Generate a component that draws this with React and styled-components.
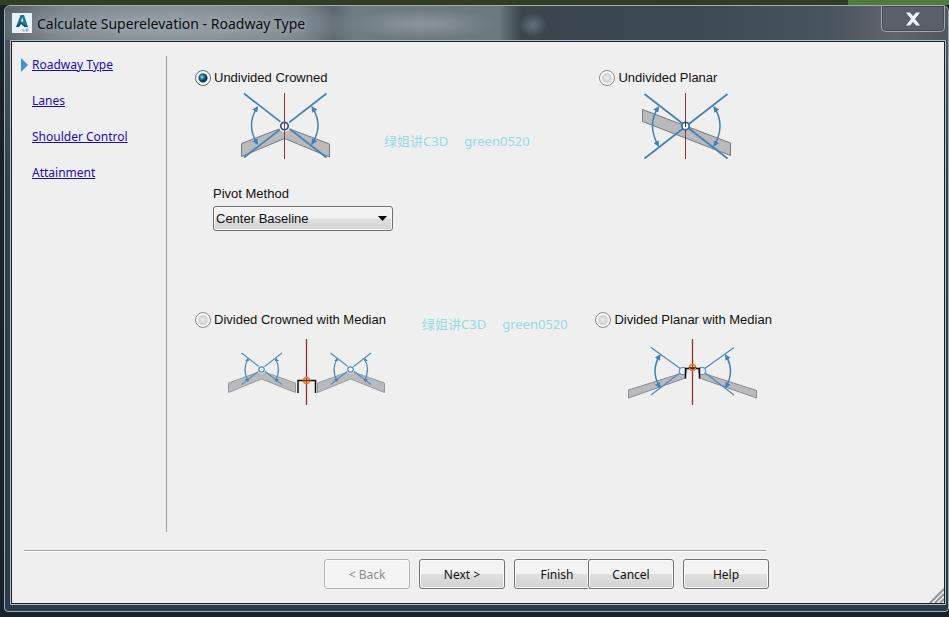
import React, { useState } from "react";
import styled, { createGlobalStyle } from "styled-components";

const dialogFont = `"Noto Sans", "Open Sans", sans-serif`;
const labelFont = `"Liberation Sans", Arial, sans-serif`;

const GlobalStyle = createGlobalStyle`
  * {
    box-sizing: border-box;
  }

  body {
    margin: 0;
    color: #111;
    font-family: ${labelFont};
    font-size: 13px;
  }
`;

const Desktop = styled.div`
  display: flex;
  min-height: 100vh;
  padding: 5px 0 5px 4px;
  background: linear-gradient(90deg, #2f3f22 0, #2f3d24 848px, #4f7c3c 848px) top / 100% 5px
      no-repeat,
    #17222a;
`;

const Window = styled.section`
  display: flex;
  flex: 1;
  flex-direction: column;
  padding: 0 2px 6px 5px;
  border: 1px solid #a3adb0;
  border-radius: 6px 6px 4px 4px;
  background: linear-gradient(180deg, #4d5a62 0, #46525c 60px, #2f4052 180px, #2b3b49 100%);
`;

const TitleBar = styled.header`
  display: flex;
  align-items: flex-start;
  height: 34px;
  margin: 0 -2px 0 -5px;
  padding-left: 7px;
  border-radius: 6px 6px 0 0;
  background: radial-gradient(ellipse 14px 12px at 528px 19px, #66727b, transparent),
    radial-gradient(ellipse 75px 15px at 417px 18px, #8b959e, transparent),
    radial-gradient(ellipse 190px 30px at 170px 19px, #9099a1 30%, transparent),
    linear-gradient(
      90deg,
      #58636a 0,
      #77818a 60px,
      #78828a 290px,
      #5b6770 328px,
      #6f7b83 348px,
      #6c7880 494px,
      #3a454e 516px,
      #3c4852 680px,
      #47535d 820px,
      #62646e 890px,
      #4e5862 100%
    );
`;

const AppIcon = styled.svg`
  width: 20px;
  height: 20px;
  margin-top: 7px;
`;

const Title = styled.h1`
  flex: 1;
  margin: 8px 0 0 5px;
  color: #0b0d10;
  font-family: ${dialogFont};
  font-size: 14px;
  font-weight: 400;
  line-height: 20px;
  text-shadow: 0 0 6px #b9c1c8;
`;

const CloseButton = styled.button`
  display: grid;
  place-items: center;
  width: 64px;
  height: 26px;
  margin-right: 3px;
  padding: 0;
  border: 1px solid #a3a9b0;
  border-top: 0;
  border-radius: 0 0 5px 5px;
  background: #5b5f69;
  box-shadow: inset 0 0 0 1px #454b54;
`;

const Client = styled.div`
  display: flex;
  flex: 1;
  flex-direction: column;
  border: 1px solid #b5bfc4;
  border-radius: 1px;
  outline: 1px solid #16212b;
  outline-offset: -2px;
  padding: 1px;
  background: #f0efef;
`;

const Page = styled.div`
  display: flex;
  flex: 1;
`;

const Nav = styled.nav`
  width: 155px;
  margin-top: 14px;
  padding: 1px 0 0 8px;
  border-right: 1px solid #a0a0a0;
`;

const NavList = styled.ul`
  display: grid;
  gap: 20px;
  margin: 0;
  padding: 0;
  list-style: none;
`;

const NavItem = styled.li`
  display: flex;
  align-items: center;
  height: 16px;
`;

const Marker = styled.svg`
  width: 8px;
  height: 14px;
  margin-right: 4px;
`;

const NavLink = styled.a`
  color: #1a0dab;
  font-family: ${dialogFont};
  font-size: 12px;
  line-height: 16px;
`;

const Options = styled.main`
  display: grid;
  flex: 1;
  grid-template-columns: minmax(0, 8fr) minmax(0, 7fr);
  grid-template-rows: 242px auto;
  column-gap: 2px;
  padding: 28px 0 0 28px;
`;

const Option = styled.div`
  position: relative;
  padding-left: ${props => props.$inset || 0}px;
`;

const RadioLabel = styled.label`
  display: flex;
  align-items: center;
  gap: 3px;
  height: 16px;
  line-height: 16px;
  white-space: nowrap;
`;

const Radio = styled.input`
  appearance: none;
  width: 16px;
  height: 16px;
  margin: 0;
  border: 1px solid #8a8b8c;
  border-radius: 50%;
  background: radial-gradient(circle at 8px 8px, #f0f0f0 0, #cfd0d2 4px, #fafafa 6px) border-box;

  &:checked {
    border-color: #5b6a76;
    background: radial-gradient(circle at 7px 7px, #9fe0f5 0, #2d7fa3 2px, transparent 4px) border-box,
      radial-gradient(circle at 8px 8px, #0e3550 4px, #f4f8fa 5px) border-box;
  }
`;

const Figure = styled.svg`
  display: block;
  margin: ${props => props.$top}px 0 0 ${props => props.$left}px;
`;

const Watermark = styled.div`
  position: absolute;
  top: ${props => props.$top}px;
  left: ${props => props.$left}px;
  display: flex;
  gap: 16px;
  color: #94dbe4;
  font-family: "Noto Sans", "Noto Sans CJK SC", sans-serif;
  font-size: 13px;
  line-height: 18px;
  white-space: nowrap;
`;

const Field = styled.div`
  display: grid;
  gap: 4px;
  width: 180px;
  margin: 26px 0 0 18px;
  line-height: 16px;
`;

const SelectBox = styled.div`
  display: grid;
  align-items: center;

  > * {
    grid-area: 1 / 1;
  }
`;

const Select = styled.select`
  appearance: none;
  width: 100%;
  height: 25px;
  padding: 0 20px 0 2px;
  border: 1px solid #707070;
  border-radius: 3px;
  background: linear-gradient(#f2f2f2 45%, #dfdfe0 55%, #d3d3d4);
  box-shadow: inset 0 0 0 1px #f8f8f8;
  color: #111;
  font: 13px ${labelFont};
`;

const Arrow = styled.svg`
  justify-self: end;
  width: 9px;
  height: 5px;
  margin-right: 6px;
  pointer-events: none;
`;

const Rule = styled.hr`
  height: 2px;
  margin: 18px 178px 0 12px;
  border: 0;
  border-top: 1px solid #a0a0a0;
  border-bottom: 1px solid #fff;
`;

const Footer = styled.footer`
  display: flex;
  gap: 9px;
  justify-content: flex-end;
  padding: 7px 175px 14px 0;
`;

const Button = styled.button`
  width: 86px;
  height: 30px;
  margin-left: ${props => props.$shift || 0}px;
  padding: 0;
  border: 1px solid #707070;
  border-radius: 3px;
  background: linear-gradient(#f3f3f3 48%, #dfdfe0 52%, #d2d2d3);
  box-shadow: inset 0 0 0 1px #fafafa, 0 0 0 1px #f4f4f4;
  color: #111;
  font-family: ${dialogFont};
  font-size: 12px;

  &:disabled {
    border-color: #b0b2b5;
    background: #f4f4f4;
    color: #8a8a8c;
  }
`;

const Grip = styled.svg`
  position: absolute;
  right: 5px;
  bottom: 14px;
  width: 15px;
  height: 15px;
`;

const blue = "#4480b3";
const slab = { fill: "#b9babd", stroke: "#77797c" };

const Head = ({ id }) => (
  <marker
    id={id}
    viewBox="0 0 6 6"
    refX="5"
    refY="3"
    markerWidth="6"
    markerHeight="6"
    markerUnits="userSpaceOnUse"
    orient="auto-start-reverse"
  >
    <path d="M0 0L6 3L0 6Z" fill={blue} />
  </marker>
);

const Arcs = ({ id, left, right }) => (
  <g fill="none" stroke={blue} strokeWidth="1.5" markerStart={`url(#${id})`} markerEnd={`url(#${id})`}>
    <path d={left} />
    <path d={right} />
  </g>
);

const UndividedCrowned = () => (
  <Figure $top={6} $left={44} width="92" height="68" aria-hidden="true">
    <Head id="head-uc" />
    <path d="M2.5 51.5L45.5 35L90.5 52V65L45.5 46.5L2.5 64.5Z" {...slab} />
    <path d="M45.5 1V67" stroke="#8c3540" />
    <path d="M5 1.5L87.5 65.5M87.5 1.5L5 65.5" stroke={blue} strokeWidth="1.7" />
    <Arcs id="head-uc" left="M18.5 15Q6.5 33 18.5 52" right="M73 15Q85 33 73 52" />
    <circle cx="45.5" cy="34" r="6" fill="#f0efef" />
    <circle cx="45.5" cy="34" r="3.7" fill="#fff" stroke="#3e4c7c" strokeWidth="1.7" />
    <path d="M45.5 28V40" stroke="#8c3560" />
  </Figure>
);

const UndividedPlanar = () => (
  <Figure $top={6} $left={41} width="92" height="68" aria-hidden="true">
    <Head id="head-up" />
    <path d="M2.5 17.5L90.5 51V63.5L2.5 29.5Z" {...slab} />
    <path d="M45.5 1V67" stroke="#8c3540" />
    <path d="M4.5 2L87.5 66.5M87.5 2L4.5 66.5" stroke={blue} strokeWidth="1.7" />
    <Arcs id="head-up" left="M18.5 15Q6.5 33 18.5 54" right="M74 15Q86 33 74 54" />
    <circle cx="45.5" cy="34" r="3.7" fill="#fff" stroke="#3f6595" strokeWidth="1.7" />
    <path d="M45.5 30V35" stroke="#333" />
  </Figure>
);

const CrownSide = () => (
  <>
    <path d="M1.5 45L34.5 33L68.5 45V54.5L34.5 41L1.5 54.5Z" {...slab} stroke="#96989b" />
    <path d="M14.5 15L55 46.5M55 15L14.5 46.5" stroke="#558fc0" strokeWidth="1.2" />
    <g fill="none" stroke="#4e89bb" strokeWidth="1.2">
      <path d="M21 21Q15 31 21 43" />
      <path d="M48.5 21Q54.5 31 48.5 43" />
    </g>
    <path d="M18 23L21 20L22 23ZM18 41L21 44L22 41ZM52 23L49 20L48 23ZM52 41L49 44L48 41Z" fill={blue} />
    <circle cx="34.5" cy="31.5" r="4" fill="#f0efef" />
    <circle cx="34.5" cy="31.5" r="2.7" fill="#fff" stroke="#4e89bb" strokeWidth="1.2" />
  </>
);

const Center = ({ x, y }) => (
  <>
    <circle cx={x} cy={y} r="3" fill="none" stroke="#e8762c" strokeWidth="1.5" />
    <path d={`M${x - 4} ${y}H${x + 4}`} stroke="#753714" />
  </>
);

const DividedCrowned = () => (
  <Figure $top={10} $left={32} width="160" height="68" aria-hidden="true">
    <CrownSide />
    <g transform="translate(89)">
      <CrownSide />
    </g>
    <path d="M71 55V42.5H88.5V55" fill="none" stroke="#111" strokeWidth="1.5" />
    <path d="M79.5 1V67" stroke="#8c2f35" strokeWidth="1.3" />
    <Center x={79.5} y={42.5} />
  </Figure>
);

const DividedPlanar = () => (
  <Figure $top={10} $left={32} width="132" height="68" aria-hidden="true">
    <Head id="head-dp" />
    <path d="M1.5 52L58.5 34V40L1.5 60Z" {...slab} stroke="#898b8e" />
    <path d="M72.5 34L129.5 52.5V60L72.5 40Z" {...slab} stroke="#898b8e" />
    <path d="M24 9.5L56 32.5L24 57M107 9.5L75 32.5L107 57" fill="none" stroke="#558abb" strokeWidth="1.3" />
    <Arcs id="head-dp" left="M33 17Q23 33 33 49.5" right="M98.5 17Q108.5 33 98.5 49.5" />
    <circle cx="56" cy="33" r="3.7" fill="#edf2f6" stroke="#6597c1" strokeWidth="1.2" />
    <circle cx="75" cy="33" r="3.7" fill="#edf2f6" stroke="#6597c1" strokeWidth="1.2" />
    <path d="M58.5 40.5V30.5H72.5V40.5" fill="none" stroke="#111" strokeWidth="1.5" />
    <path d="M65.5 1V67" stroke="#8c2f35" strokeWidth="1.3" />
    <Center x={65.5} y={29.5} />
  </Figure>
);

const OPTIONS = [
  { id: "crowned", label: "Undivided Crowned", Drawing: UndividedCrowned, mark: [189, 62] },
  { id: "planar", label: "Undivided Planar", Drawing: UndividedPlanar, inset: 4 },
  { id: "crowned-median", label: "Divided Crowned with Median", Drawing: DividedCrowned, mark: [227, 3] },
  { id: "planar-median", label: "Divided Planar with Median", Drawing: DividedPlanar }
];

const STEPS = ["Roadway Type", "Lanes", "Shoulder Control", "Attainment"];

export default () => {
  const [type, setType] = useState("crowned");

  return (
    <Desktop>
      <GlobalStyle />
      <Window>
        <TitleBar>
          <AppIcon viewBox="0 0 20 20" aria-hidden="true">
            <path d="M0 0H20V20H0Z" fill="#e6f2f9" />
            <path d="M4 14L8.5 2H12L16 14H12.5L11.5 11H8L7 14Z" fill="#24758f" />
            <path d="M9 8.5L10.3 4.5L11.5 8.5Z" fill="#e6f2f9" />
            <path d="M4 14L8 9L16 14H12.5L9 11L7 14Z" fill="#175068" />
            <path d="M11 16V18H13M14 16H16V18H14Z" fill="none" stroke="#8ba9bb" />
          </AppIcon>
          <Title>Calculate Superelevation - Roadway Type</Title>
          <CloseButton type="button" aria-label="Close">
            <svg width="18" height="16" viewBox="0 0 18 16" aria-hidden="true">
              <path
                d="M1 1H6L9 4.5L12 1H17L11.5 8L17 15H12L9 11.5L6 15H1L6.5 8Z"
                fill="#f2f3f8"
                stroke="#555a65"
              />
            </svg>
          </CloseButton>
        </TitleBar>
        <Client>
          <Page>
            <Nav>
              <NavList>
                {STEPS.map((step, i) => (
                  <NavItem key={step}>
                    <Marker aria-hidden="true">
                      {i === 0 && <path d="M1 0L8 7L1 14Z" fill="#3f94d1" />}
                    </Marker>
                    <NavLink href="#">{step}</NavLink>
                  </NavItem>
                ))}
              </NavList>
            </Nav>
            <Options>
              {OPTIONS.map(({ id, label, Drawing, inset, mark }) => (
                <Option key={id} $inset={inset}>
                  <RadioLabel>
                    <Radio type="radio" name="roadway" checked={type === id} onChange={() => setType(id)} />
                    {label}
                  </RadioLabel>
                  <Drawing />
                  {id === "crowned" && (
                    <Field>
                      <label htmlFor="pivot">Pivot Method</label>
                      <SelectBox>
                        <Select id="pivot">
                          <option>Center Baseline</option>
                        </Select>
                        <Arrow viewBox="0 0 9 5" aria-hidden="true">
                          <path d="M0 0H9L4.5 5Z" fill="#000" />
                        </Arrow>
                      </SelectBox>
                    </Field>
                  )}
                  {mark && (
                    <Watermark $left={mark[0]} $top={mark[1]}>
                      <span>绿姐讲C3D</span>
                      <span>green0520</span>
                    </Watermark>
                  )}
                </Option>
              ))}
            </Options>
          </Page>
          <Rule />
          <Footer>
            <Button type="button" disabled>
              &lt; Back
            </Button>
            <Button type="button">Next &gt;</Button>
            <Button type="button">Finish</Button>
            <Button type="button" $shift={-21}>
              Cancel
            </Button>
            <Button type="button">Help</Button>
          </Footer>
        </Client>
      </Window>
      <Grip viewBox="0 0 15 15" aria-hidden="true">
        <path d="M1 15L15 1M6 15L15 6M11 15L15 11" stroke="#8f9399" strokeWidth="2" />
      </Grip>
    </Desktop>
  );
};
